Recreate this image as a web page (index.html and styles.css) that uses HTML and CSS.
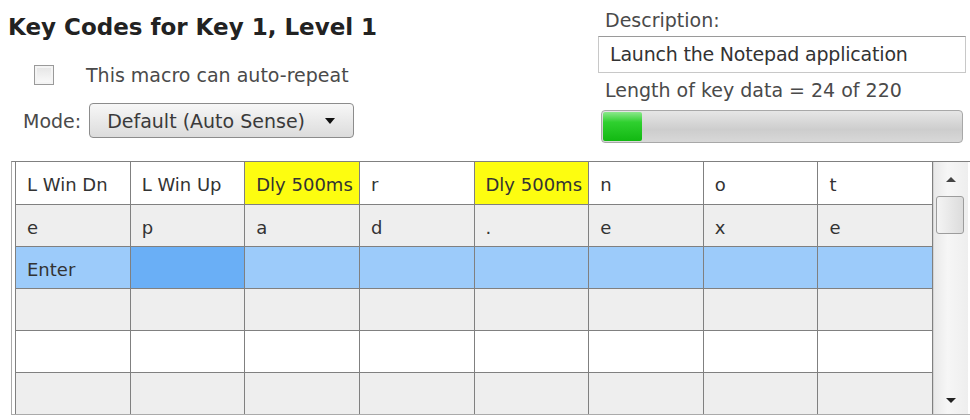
FILE: index.html
```html
<!DOCTYPE html>
<html lang="en">
<head>
    <meta charset="UTF-8">
    <title>Key Codes</title>
    <link rel="stylesheet" href="styles.css">
</head>
<body>
    <div class="top">
        <div class="left">
            <h1>Key Codes for Key 1, Level 1</h1>
            <div class="check-row">
                <span class="checkbox"></span>
                <span>This macro can auto-repeat</span>
            </div>
            <div class="mode-row">
                <span>Mode:</span>
                <div class="dropdown">
                    <span>Default (Auto Sense)</span>
                    <span class="arrow"></span>
                </div>
            </div>
        </div>
        <div class="right">
            <div class="label">Description:</div>
            <div class="desc">Launch the Notepad application</div>
            <div class="label len">Length of key data = 24 of 220</div>
            <div class="progress"><div class="fill" style="width: 11%"></div></div>
        </div>
    </div>

    <div class="grid">
        <table>
            <tr class="white">
                <td>L Win Dn</td><td>L Win Up</td><td class="delay">Dly 500ms</td><td>r</td>
                <td class="delay">Dly 500ms</td><td>n</td><td>o</td><td>t</td>
            </tr>
            <tr class="grey">
                <td>e</td><td>p</td><td>a</td><td>d</td><td>.</td><td>e</td><td>x</td><td>e</td>
            </tr>
            <tr class="selected">
                <td>Enter</td><td class="current"></td><td></td><td></td><td></td><td></td><td></td><td></td>
            </tr>
            <tr class="grey">
                <td></td><td></td><td></td><td></td><td></td><td></td><td></td><td></td>
            </tr>
            <tr class="white">
                <td></td><td></td><td></td><td></td><td></td><td></td><td></td><td></td>
            </tr>
            <tr class="grey">
                <td></td><td></td><td></td><td></td><td></td><td></td><td></td><td></td>
            </tr>
        </table>
        <div class="scrollbar">
            <span class="up"></span>
            <div class="thumb"></div>
            <span class="down"></span>
        </div>
    </div>
</body>
</html>
```

FILE: styles.css
```css
body {
    margin: 0;
    font-family: "DejaVu Sans", Verdana, sans-serif;
    font-size: 19px;
    color: #4a4a4a;
    background: #fff;
}
.top {
    display: flex;
    justify-content: space-between;
    height: 161px;
}
.left {
    padding-left: 8px;
}
h1 {
    margin: 13px 0 0 0;
    font-size: 23px;
    line-height: 28px;
    color: #222;
}
.check-row {
    display: flex;
    align-items: center;
    gap: 32px;
    margin: 23px 0 0 26px;
}
.checkbox {
    width: 18px;
    height: 18px;
    border: 1px solid #9a9a9a;
    background: linear-gradient(#e4e4e4, #fbfbfb);
    box-shadow: inset 0 0 0 2px #f4f4f4;
}
.mode-row {
    display: flex;
    align-items: center;
    gap: 8px;
    margin: 17px 0 0 15px;
}
.dropdown {
    width: 265px;
    height: 35px;
    box-sizing: border-box;
    border: 1px solid #8c8c8c;
    border-radius: 4px;
    background: linear-gradient(#f7f7f7, #dcdcdc);
    display: flex;
    align-items: center;
    justify-content: space-between;
    padding: 0 18px 0 17px;
    color: #3a3a3a;
}
.arrow {
    border-left: 5px solid transparent;
    border-right: 5px solid transparent;
    border-top: 6px solid #111;
}
.right {
    width: 368px;
    margin-right: 4px;
}
.label {
    margin: 9px 0 0 7px;
    line-height: 22px;
}
.len {
    margin-top: 6px;
}
.desc {
    margin-top: 5px;
    height: 37px;
    box-sizing: border-box;
    border: 1px solid #c8c8c8;
    border-top-color: #9a9a9a;
    padding: 6px 0 0 11px;
    color: #333;
    letter-spacing: -0.2px;
}
.progress {
    margin: 9px 0 0 3px;
    width: 362px;
    height: 33px;
    box-sizing: border-box;
    border: 1px solid #a8a8a8;
    border-radius: 4px;
    background: linear-gradient(#e6e6e6, #cdcdcd 60%, #d8d8d8);
    padding: 1px;
}
.fill {
    height: 100%;
    border-radius: 2px;
    background: linear-gradient(#8ce88c, #2fd02f 35%, #12b812);
}
.grid {
    display: flex;
    margin-left: 11px;
    width: 955px;
    border: 1px solid #aaa;
    border-top-color: #808080;
    padding-left: 3px;
}
table {
    border-collapse: collapse;
    table-layout: fixed;
    width: 918px;
    font-size: 18px;
    color: #333;
}
td {
    height: 42px;
    box-sizing: border-box;
    border: 1px solid #808080;
    padding: 4px 0 0 11px;
    white-space: nowrap;
    overflow: hidden;
}
tr:first-child td {
    border-top: none;
}
tr:last-child td {
    border-bottom: none;
}
.white td {
    background: #fff;
}
.grey td {
    background: #eeeeee;
}
.selected td {
    background: #9ccbfa;
}
.selected td.current {
    background: #6aaff6;
}
td.delay {
    background: #fdfd10;
}
.scrollbar {
    width: 34px;
    position: relative;
    background: linear-gradient(90deg, #e9e9e9, #f6f6f6 40%, #eeeeee);
    border-left: 1px solid #d4d4d4;
}
.up,
.down {
    position: absolute;
    left: 12px;
    border-left: 5px solid transparent;
    border-right: 5px solid transparent;
}
.up {
    top: 15px;
    border-bottom: 5px solid #444;
}
.down {
    bottom: 11px;
    border-top: 5px solid #222;
}
.thumb {
    position: absolute;
    top: 34px;
    left: 2px;
    width: 28px;
    height: 38px;
    box-sizing: border-box;
    border: 1px solid #9c9c9c;
    border-radius: 3px;
    background: linear-gradient(90deg, #f4f4f4, #dcdcdc);
}
```
